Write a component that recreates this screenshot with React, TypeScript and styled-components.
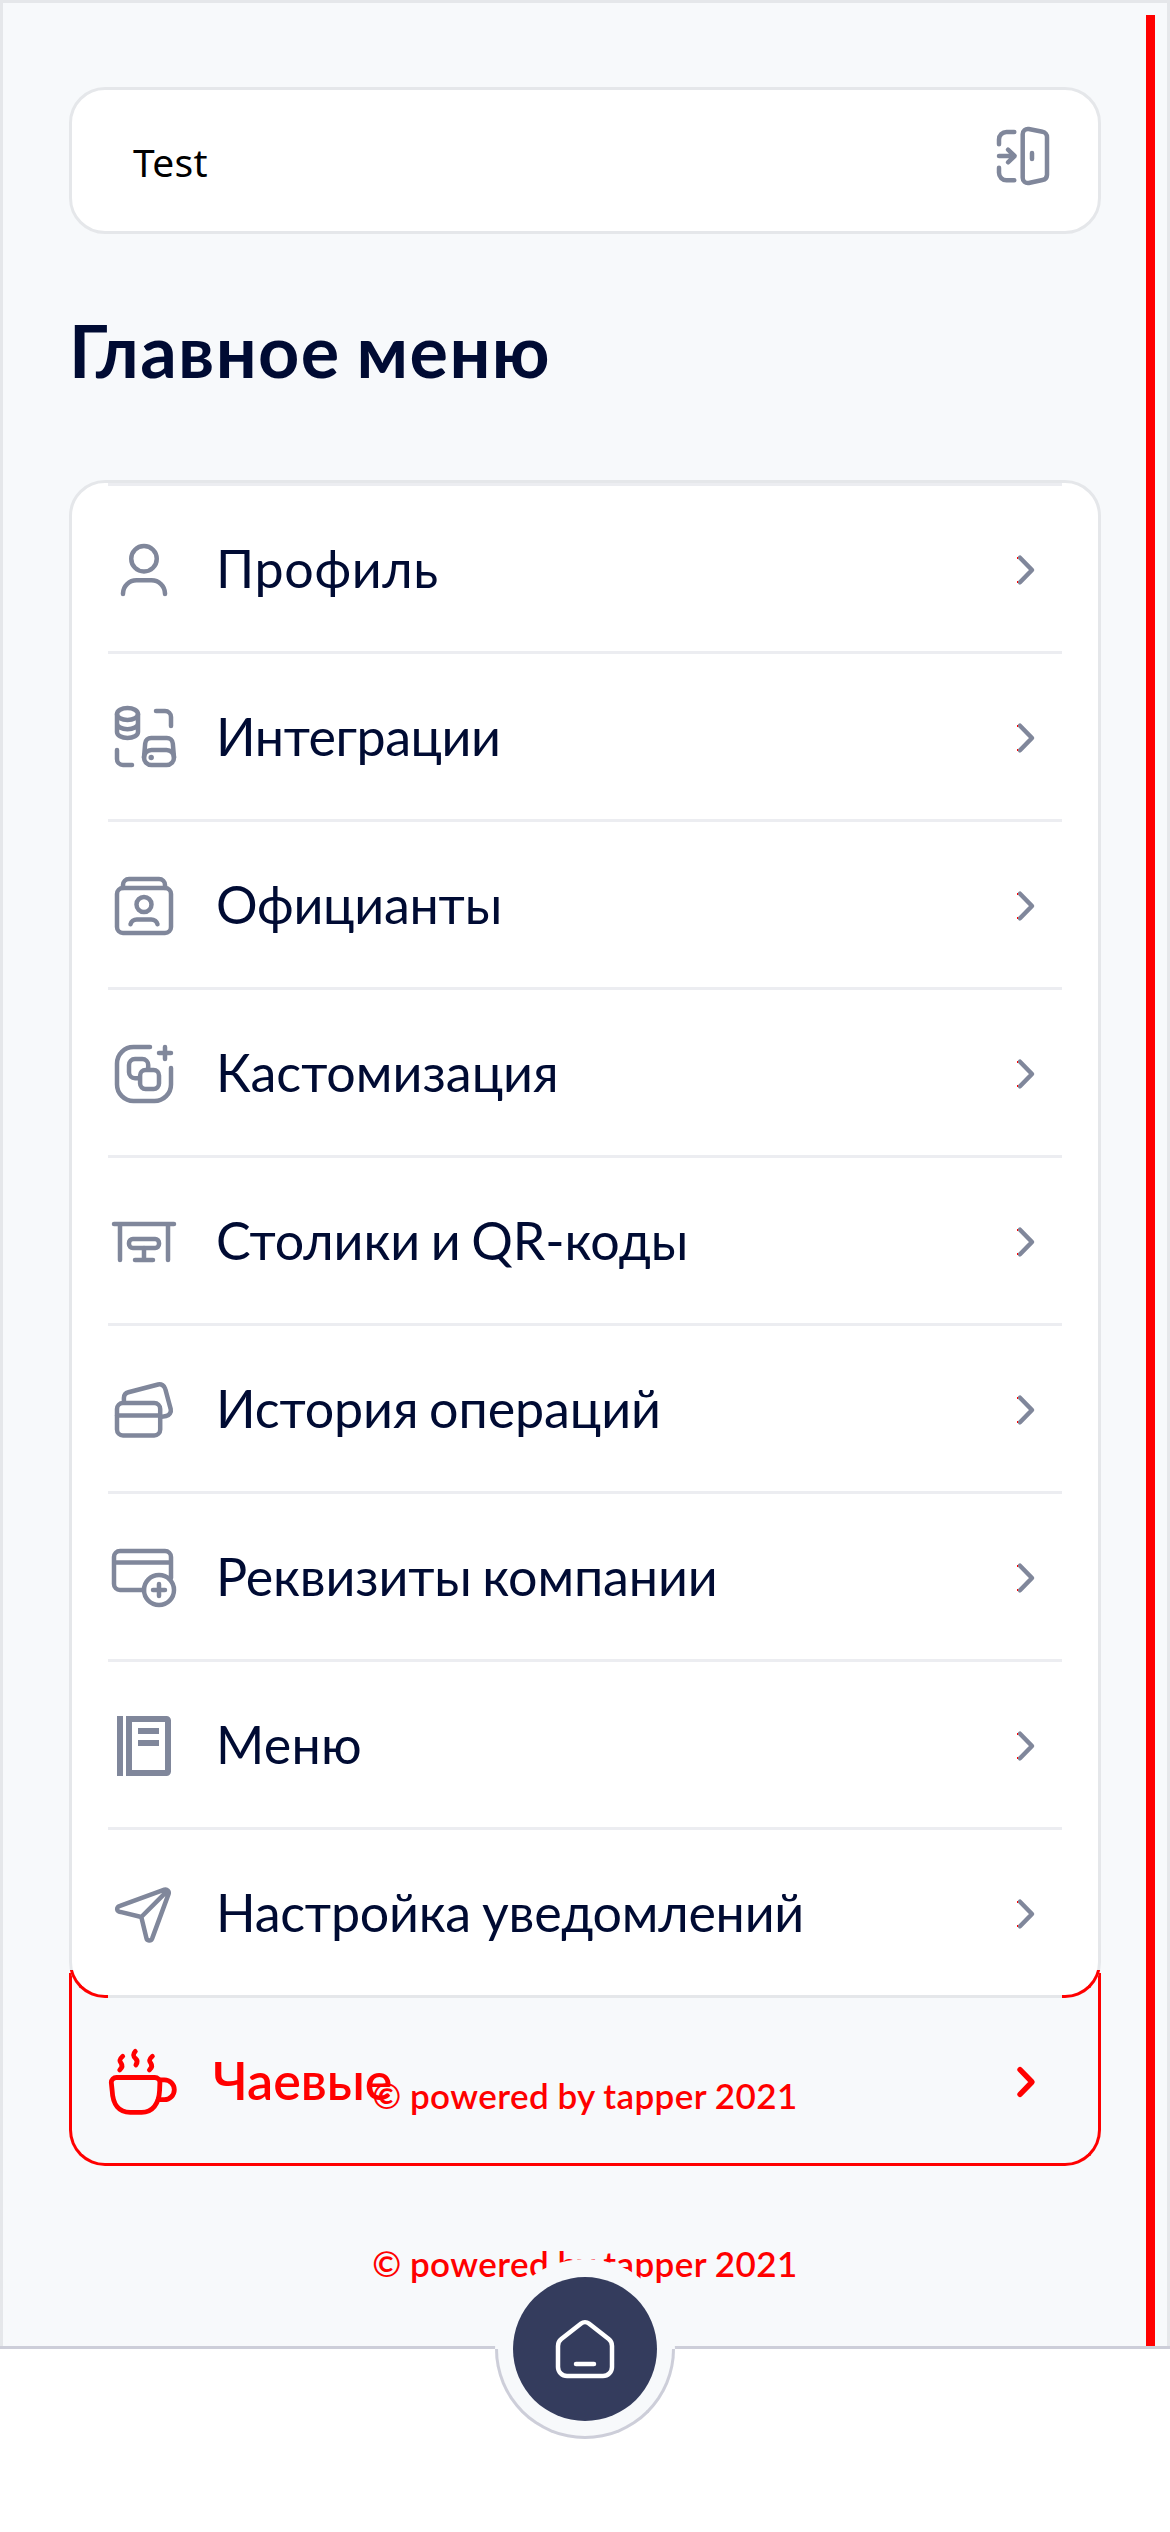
import React from "react";
import styled, { createGlobalStyle } from "styled-components";

const colors = {
  page: "#f7f9fb",
  line: "#e5e7ea",
  rowLine: "#ecedf1",
  navLine: "#cdced9",
  ink: "#000b33",
  icon: "#80879b",
  alert: "#ff0000",
  home: "#343c5d",
};

const GlobalStyle = createGlobalStyle`
  *, *::before, *::after { box-sizing: border-box; }
  body { margin: 0; background: #fff; }
`;

const Page = styled.div`
  width: 1170px;
  height: 2532px;
  display: flex;
  flex-direction: column;
  overflow: hidden;
  font-family: Lato, "Noto Sans", sans-serif;
  color: ${colors.ink};
`;

const Screen = styled.main`
  position: relative;
  height: 2346px;
  padding: 84px 66px 0;
  border: 3px solid ${colors.line};
  border-bottom: 0;
  background: ${colors.page};
`;

const ScrollThumb = styled.div`
  position: absolute;
  top: 12px;
  right: 12px;
  bottom: 0;
  width: 9px;
  background: ${colors.alert};
`;

const AccountCard = styled.header`
  display: flex;
  align-items: center;
  justify-content: space-between;
  height: 147px;
  padding: 0 39px 0 61px;
  border: 3px solid ${colors.line};
  border-radius: 36px;
  background: #fff;
`;

const AccountName = styled.span`
  padding-top: 1px;
  font-family: "Noto Sans", sans-serif;
  font-size: 39px;
  letter-spacing: 0.3px;
  color: #000;
`;

const ExitButton = styled.div`
  display: flex;
  padding-bottom: 9px;
`;

const Title = styled.h1`
  margin: 71px 0 85px;
  font-size: 72px;
  line-height: 90px;
  font-weight: 700;
  letter-spacing: 1.4px;
  word-spacing: -3px;
`;

const MenuCard = styled.ul`
  position: relative;
  z-index: 1;
  margin: 0;
  padding: 0 36px;
  list-style: none;
  border: 3px solid ${colors.line};
  border-radius: 36px;
  background: #fff;

  &::before,
  &::after {
    content: "";
    position: absolute;
    bottom: -3px;
    width: 39px;
    height: 39px;
    border-bottom: 3px solid ${colors.alert};
    clip-path: inset(11px 0 0 0);
  }
  &::before {
    left: -3px;
    border-left: 3px solid ${colors.alert};
    border-bottom-left-radius: 36px;
  }
  &::after {
    right: -3px;
    border-right: 3px solid ${colors.alert};
    border-bottom-right-radius: 36px;
  }
`;

const MenuRow = styled.li`
  display: flex;
  align-items: center;
  gap: 36px;
  height: 168px;
  padding-top: 3px;
  border-top: 3px solid ${colors.rowLine};
`;

const Label = styled.span<{ $spacing?: number; $word?: number }>`
  flex: 1;
  padding-bottom: 4px;
  font-size: 52px;
  line-height: 60px;
  white-space: nowrap;
  letter-spacing: ${(p) => p.$spacing ?? 0}px;
  word-spacing: ${(p) => p.$word ?? 0}px;
`;

const TipsRow = styled.div`
  position: relative;
  display: flex;
  align-items: center;
  gap: 33px;
  height: 168px;
  padding: 0 39px;
  color: ${colors.alert};

  &::before {
    content: "";
    position: absolute;
    inset: -25px 0 0 0;
    border: 3px solid ${colors.alert};
    border-top: 0;
    border-radius: 0 0 36px 36px;
  }
`;

const TipsLabel = styled(Label)`
  font-weight: 600;
`;

const Copyright = styled.p`
  margin: 0;
  font-size: 35px;
  line-height: 42px;
  font-weight: 600;
  letter-spacing: 0.45px;
  word-spacing: -1px;
  text-align: center;
  color: ${colors.alert};
`;

const FloatingCopyright = styled(Copyright)`
  position: absolute;
  left: 0;
  right: 0;
  top: 76px;
`;

const FooterCopyright = styled(Copyright)`
  margin-top: 76px;
`;

const Nav = styled.nav`
  position: relative;
  z-index: 2;
  height: 186px;
  border-top: 3px solid ${colors.navLine};
  background: #fff;
`;

const HomeRing = styled.div`
  position: absolute;
  left: 495px;
  top: -90px;
  width: 180px;
  height: 180px;
  display: flex;
  align-items: center;
  justify-content: center;
  border-radius: 50%;
  background: ${colors.page};

  &::before {
    content: "";
    position: absolute;
    left: 0;
    right: 0;
    bottom: 0;
    height: 90px;
    border: 3px solid ${colors.navLine};
    border-top: 0;
    border-radius: 0 0 90px 90px;
  }
`;

const HomeButton = styled.div`
  display: flex;
  align-items: center;
  justify-content: center;
  width: 144px;
  height: 144px;
  border-radius: 50%;
  background: ${colors.home};
`;

const Glyph = styled.svg<{ $color?: string; $stroke?: number }>`
  position: relative;
  flex: none;
  display: block;
  width: 72px;
  height: 72px;
  overflow: visible;
  fill: none;
  stroke: ${(p) => p.$color ?? colors.icon};
  stroke-width: ${(p) => p.$stroke ?? 1.5};
  stroke-linecap: round;
  stroke-linejoin: round;
`;

type IconProps = { children: React.ReactNode; color?: string; width?: number };

const Icon = ({ children, color, width }: IconProps) => (
  <Glyph viewBox="0 0 24 24" $color={color} $stroke={width}>
    {children}
  </Glyph>
);

const Chevron = ({ alert }: { alert?: boolean }) => (
  <Icon color={alert ? colors.alert : undefined} width={alert ? 1.8 : 1.5}>
    <path d="M10 7.9 14 12l-4 4.1" />
    {!alert && <path d="M9 7.7h.35v.6H9zM9 15.7h.35v.6H9z" fill={colors.alert} stroke="none" />}
  </Icon>
);

const glyphs = {
  profile: (
    <>
      <circle cx="12" cy="8.25" r="4.25" />
      <path d="M5 20v-.2a4.5 4.5 0 0 1 4.5-4.4h5A4.5 4.5 0 0 1 19 19.8v.2" />
    </>
  ),
  integrations: (
    <>
      <ellipse cx="6.5" cy="4" rx="3.5" ry="2" />
      <path d="M3 4v6c0 1.1 1.57 2 3.5 2s3.5-.9 3.5-2V4M3 7.1c0 1.1 1.57 2 3.5 2s3.5-.9 3.5-2" />
      <path d="M16 3h3a2 2 0 0 1 2 2v3M3 16v3a2 2 0 0 0 2 2h3" />
      <rect x="12" y="16" width="10" height="5" rx="2.5" />
      <path d="m12 18.5.4-4.7a2 2 0 0 1 2-1.8h5.2a2 2 0 0 1 2 1.8l.4 4.7" />
      <circle cx="14.4" cy="18.5" r=".9" fill={colors.icon} stroke="none" />
    </>
  ),
  waiters: (
    <>
      <rect x="3" y="6" width="18" height="15" rx="2" />
      <path d="M5 6V5a2 2 0 0 1 2-2h10a2 2 0 0 1 2 2v1" />
      <circle cx="12" cy="11.5" r="2.5" />
      <path d="M7.5 18.1c.2-.9 1.1-1.6 2.1-1.6h4.8c1 0 1.9.7 2.1 1.6" />
    </>
  ),
  customize: (
    <>
      <path d="M14 3H8.5A5.5 5.5 0 0 0 3 8.5v7A5.5 5.5 0 0 0 8.5 21h7a5.5 5.5 0 0 0 5.5-5.5V10M19 3v4M17 5h4" />
      <path d="M10.6 13.4H9a2 2 0 0 1-2-2V9a2 2 0 0 1 2-2h2.4a2 2 0 0 1 2 2v1.6" />
      <rect x="10.7" y="10.7" width="6.3" height="6.3" rx="1.8" />
    </>
  ),
  tables: (
    <>
      <path d="M2 6h20M4 6v12M20 6v12M12 14v4M9 18h6" />
      <rect x="7" y="11" width="10" height="3" rx="1.3" />
    </>
  ),
  history: (
    <>
      <rect x="3" y="9.7" width="14.4" height="10.8" rx="2" />
      <path d="M3 13.8h14.4M5.3 9.5V8a2 2 0 0 1 1.5-1.9l9.9-2.6a2 2 0 0 1 2.4 1.5l1.8 6.7a1.9 1.9 0 0 1-1.5 2.3l-1.6.3" />
    </>
  ),
  requisites: (
    <>
      <path d="M12 16H4a2 2 0 0 1-2-2V5a2 2 0 0 1 2-2h15a2 2 0 0 1 2 2v7M2 6.8h19" />
      <circle cx="17" cy="16" r="5" />
      <path d="M17 14v4M15 16h4" />
    </>
  ),
  menu: (
    <path
      fillRule="evenodd"
      fill={colors.icon}
      stroke="none"
      d="M3 2h2v20H3zM6 2h13.5A1.5 1.5 0 0 1 21 3.5v17a1.5 1.5 0 0 1-1.5 1.5H6zM8 4v16h11V4zM10 6h7v2h-7zM10 10h7v2h-7z"
    />
  ),
  notifications: (
    <path d="M18.8 3.9 4 9.3a1 1 0 0 0 .1 2L11.1 13l1.7 7a1 1 0 0 0 1.9.2L20.2 5.3a1.1 1.1 0 0 0-1.4-1.4zM11.1 13l8.6-8.6" />
  ),
  exit: (
    <>
      <path d="M9.1 4H6.5A2.5 2.5 0 0 0 4 6.5v1.6M4 15.9v1.7a2.5 2.5 0 0 0 2.5 2.5h2.6M4 12h5.2M7 9.9 9.2 12 7 14.1" />
      <path d="M11.9 4.7A1.7 1.7 0 0 1 13.9 3l4.6.9A1.8 1.8 0 0 1 20 5.7v12.6a1.8 1.8 0 0 1-1.5 1.7l-4.6 1a1.7 1.7 0 0 1-2-1.7zM15 11v2" />
    </>
  ),
  tips: (
    <>
      <path d="M2.8 10.5h12.8a1.7 1.7 0 0 1 1.7 1.7l-.1 2.6c-.2 4.5-2.4 7.3-6 7.3H7.4c-3.8 0-5.8-2.6-6-7.1l-.3-2.8a1.7 1.7 0 0 1 1.7-1.7z" />
      <path d="M17.4 11.3h1.4a3.3 3.3 0 0 1 0 6.6h-2.1" />
      <path d="M4.9 3.4c-1.4 1.2-1 1.8-.5 2.4.5.7.4 1.4-.5 2.2M9.1 1.8C8 3 8.6 3.6 9.2 4.2c.7.6.7 1.2.1 2.1M14.8 3.4c-1.4 1.2-1 1.8-.5 2.4.5.7.4 1.4-.5 2.2" />
    </>
  ),
  home: (
    <path d="M10.7 3.5a2.1 2.1 0 0 1 2.6 0l6.6 5.2A2.9 2.9 0 0 1 21 11v7a3 3 0 0 1-3 3H6a3 3 0 0 1-3-3v-7a2.9 2.9 0 0 1 1.1-2.3zM9 17h6" />
  ),
};

type Item = { icon: keyof typeof glyphs; text: string; spacing: number; word?: number };

const items: Item[] = [
  { icon: "profile", text: "Профиль", spacing: 0.65 },
  { icon: "integrations", text: "Интеграции", spacing: -0.45 },
  { icon: "waiters", text: "Официанты", spacing: -0.25 },
  { icon: "customize", text: "Кастомизация", spacing: 0 },
  { icon: "tables", text: "Столики и QR-коды", spacing: -0.1, word: -2.5 },
  { icon: "history", text: "История операций", spacing: -0.1, word: -2.5 },
  { icon: "requisites", text: "Реквизиты компании", spacing: -0.15, word: -2.5 },
  { icon: "menu", text: "Меню", spacing: 0.3 },
  { icon: "notifications", text: "Настройка уведомлений", spacing: -0.25, word: -2 },
];

export default function App() {
  return (
    <Page>
      <GlobalStyle />
      <Screen>
        <AccountCard>
          <AccountName>Test</AccountName>
          <ExitButton>
            <Icon>{glyphs.exit}</Icon>
          </ExitButton>
        </AccountCard>
        <Title>Главное меню</Title>
        <MenuCard>
          {items.map((item) => (
            <MenuRow key={item.text}>
              <Icon>{glyphs[item.icon]}</Icon>
              <Label $spacing={item.spacing} $word={item.word}>
                {item.text}
              </Label>
              <Chevron />
            </MenuRow>
          ))}
        </MenuCard>
        <TipsRow>
          <Icon color={colors.alert} width={1.6}>
            {glyphs.tips}
          </Icon>
          <TipsLabel>Чаевые</TipsLabel>
          <Chevron alert />
          <FloatingCopyright>© powered by tapper 2021</FloatingCopyright>
        </TipsRow>
        <FooterCopyright>© powered by tapper 2021</FooterCopyright>
        <ScrollThumb />
      </Screen>
      <Nav>
        <HomeRing>
          <HomeButton>
            <Icon color="#fff">{glyphs.home}</Icon>
          </HomeButton>
        </HomeRing>
      </Nav>
    </Page>
  );
}
